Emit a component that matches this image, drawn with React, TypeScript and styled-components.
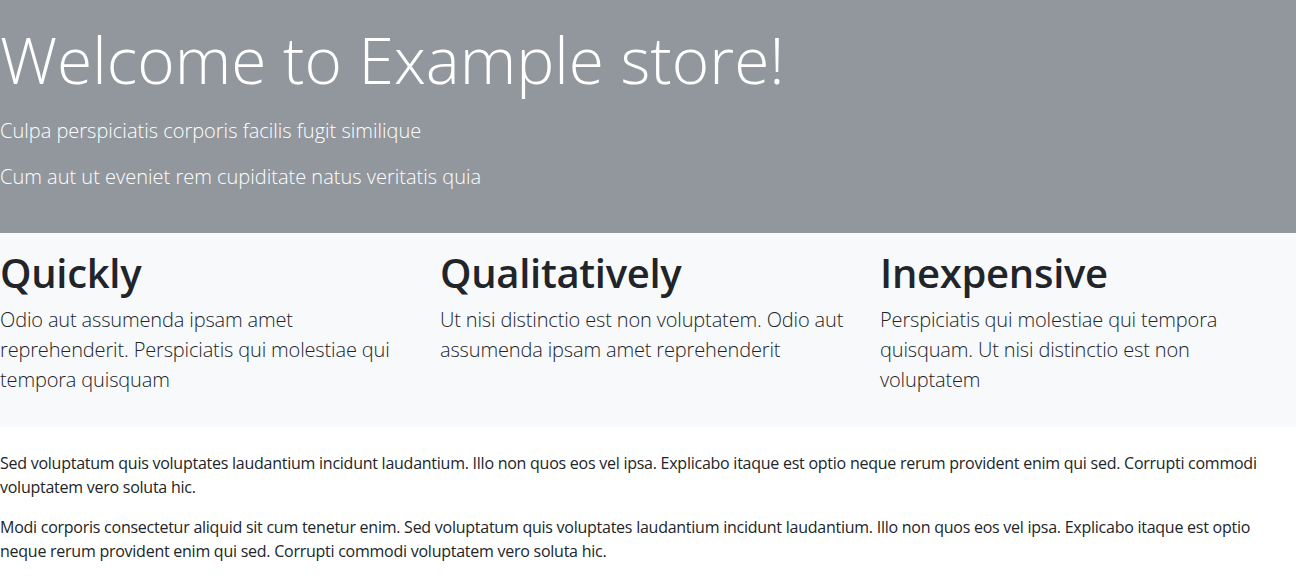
import React from "react";
import styled, { createGlobalStyle } from "styled-components";

const GlobalStyle = createGlobalStyle`
  * { box-sizing: border-box; }
  html, body { margin: 0; padding: 0; background: #ffffff; }
  body {
    font-family: "Open Sans", "Noto Sans", sans-serif;
    font-size: 16px;
    line-height: 1.5;
    color: #212529;
  }
`;

const Page = styled.main`
  display: flex;
  flex-direction: column;
  width: 100%;
`;

const Hero = styled.section`
  background: #91979d;
  color: #ffffff;
  padding: 22px 0 25px;
`;

const HeroTitle = styled.h1`
  margin: 0 0 17.5px;
  font-size: 64px;
  font-weight: 300;
  line-height: 1.2;
`;

const Lead = styled.p`
  margin: 0 0 16px;
  font-size: 20px;
  font-weight: 300;
  line-height: 1.5;
`;

const Features = styled.section`
  background: #f8f9fa;
  padding: 16px 0;
  display: grid;
  grid-template-columns: repeat(3, 410px);
  column-gap: 30px;
`;

const Feature = styled.article`
  display: flex;
  flex-direction: column;
`;

const FeatureTitle = styled.h2`
  margin: 0 0 8px;
  font-size: 40px;
  font-weight: 600;
  line-height: 1.2;
  letter-spacing: -0.3px;
  color: #212529;
`;

const FeatureText = styled.p`
  margin: 0 0 16px;
  font-size: 20px;
  font-weight: 300;
  line-height: 1.5;
  letter-spacing: -0.15px;
  color: #212529;
`;

const Body = styled.section`
  padding-top: 24px;
`;

const BodyText = styled.p`
  margin: 0 0 16px;
  font-size: 16px;
  line-height: 1.5;
  letter-spacing: -0.25px;
  color: #212529;
`;

const features = [
  {
    title: "Quickly",
    text: "Odio aut assumenda ipsam amet reprehenderit. Perspiciatis qui molestiae qui tempora quisquam",
  },
  {
    title: "Qualitatively",
    text: "Ut nisi distinctio est non voluptatem. Odio aut assumenda ipsam amet reprehenderit",
  },
  {
    title: "Inexpensive",
    text: "Perspiciatis qui molestiae qui tempora quisquam. Ut nisi distinctio est non voluptatem",
  },
];

export default function App() {
  return (
    <>
      <GlobalStyle />
      <Page>
        <Hero>
          <HeroTitle>Welcome to Example store!</HeroTitle>
          <Lead>Culpa perspiciatis corporis facilis fugit similique</Lead>
          <Lead>Cum aut ut eveniet rem cupiditate natus veritatis quia</Lead>
        </Hero>
        <Features>
          {features.map((f) => (
            <Feature key={f.title}>
              <FeatureTitle>{f.title}</FeatureTitle>
              <FeatureText>{f.text}</FeatureText>
            </Feature>
          ))}
        </Features>
        <Body>
          <BodyText>
            Sed voluptatum quis voluptates laudantium incidunt laudantium. Illo non quos eos vel ipsa. Explicabo itaque est optio neque rerum provident enim qui sed. Corrupti commodi voluptatem vero soluta hic.
          </BodyText>
          <BodyText>
            Modi corporis consectetur aliquid sit cum tenetur enim. Sed voluptatum quis voluptates laudantium incidunt laudantium. Illo non quos eos vel ipsa. Explicabo itaque est optio neque rerum provident enim qui sed. Corrupti commodi voluptatem vero soluta hic.
          </BodyText>
        </Body>
      </Page>
    </>
  );
}
